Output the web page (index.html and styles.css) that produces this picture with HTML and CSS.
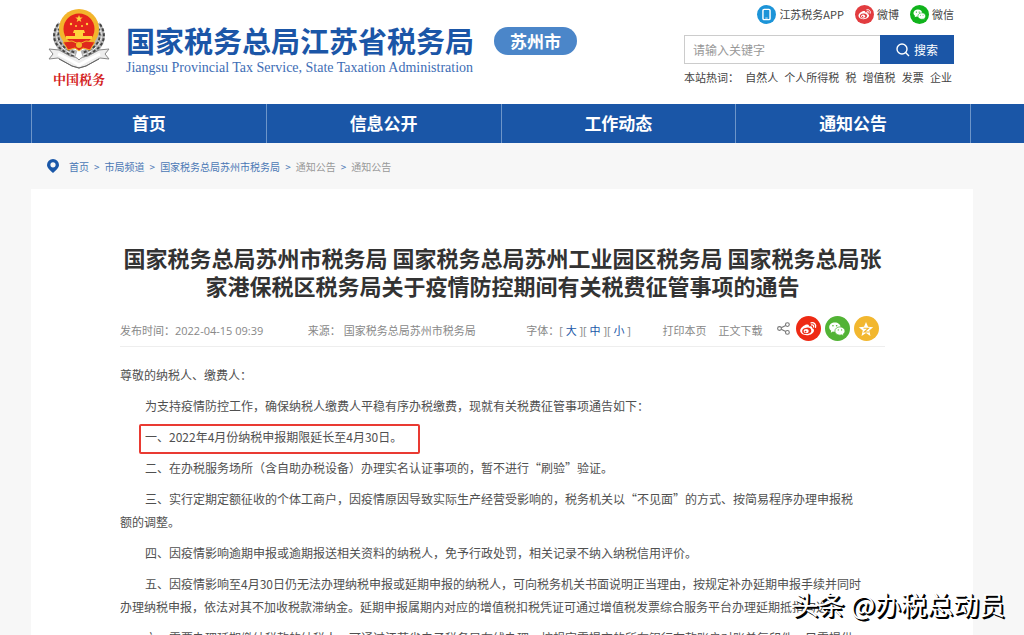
FILE: index.html
```html
<!DOCTYPE html>
<html lang="zh-CN">
<head>
<meta charset="utf-8">
<title>国家税务总局江苏省税务局</title>
<link rel="stylesheet" href="styles.css">
</head>
<body>
<svg class="defs" width="0" height="0" aria-hidden="true">
  <symbol id="weibo" viewBox="0 0 24 24">
    <path fill="#fff" d="M10.4 7.2c1.8-.6 3 .1 2.600 2 2.500-.8 4.200 0 3.500 2 1.200.4 2 1.100 2 2.300 0 2.600-3.500 5.200-7.700 5.200-4 0-7.300-1.900-7.300-4.800 0-2.700 3.800-5.900 6.900-6.700z"/>
    <ellipse cx="10.600" cy="14" rx="5" ry="3.500" fill="currentColor" transform="rotate(-8 10.600 14)"/>
    <ellipse cx="10" cy="14.300" rx="2.800" ry="2.400" fill="#fff"/>
    <circle cx="9.300" cy="14.800" r="1" fill="currentColor"/>
    <path d="M15.300 5.200c3.300-.8 5.900 1.900 4.900 5M15.800 7.500c1.700-.3 2.700.8 2.300 2.300" fill="none" stroke="#fff" stroke-width="1.400" stroke-linecap="round"/>
  </symbol>
  <symbol id="wechat" viewBox="0 0 24 24">
    <path fill="#fff" d="M9.700 5c-3.500 0-6.200 2.200-6.200 5 0 1.600.8 3 2.200 3.900L5.200 16l2.300-1.200c.7.2 1.400.3 2.200.3 3.500 0 6.200-2.200 6.200-5S13.200 5 9.700 5z"/>
    <path fill="#fff" stroke="currentColor" stroke-width=".8" d="M15.200 9.700c-3.100 0-5.500 2-5.500 4.500s2.400 4.500 5.500 4.500c.7 0 1.300-.1 1.900-.3l2.100 1.100-.5-1.900c1.200-.8 2-2 2-3.400 0-2.500-2.400-4.500-5.500-4.500z"/>
    <g fill="currentColor"><circle cx="7.600" cy="8.500" r=".9"/><circle cx="11.600" cy="8.500" r=".9"/><circle cx="13.400" cy="13" r=".7"/><circle cx="17" cy="13" r=".7"/></g>
  </symbol>
</svg>

<header class="header">
  <a class="brand" href="#">
    <span class="emblem">
      <svg width="62" height="60" viewBox="0 0 62 60" aria-hidden="true">
        <g fill="none" stroke="#b5b5b5" stroke-width="9">
          <path d="M14 16C5 28 10 40 28 46"/><path d="M48 16c9 12 4 24-14 30"/>
        </g>
        <g fill="none" stroke="#444" stroke-width="2" stroke-dasharray="3 2">
          <path d="M10 15C1 29 8 41 27 48M14 14C5 30 13 39 28 44"/><path d="M52 15c9 14 2 26-17 33M48 14c9 16 1 25-14 30"/>
        </g>
        <g fill="none" stroke="#f4f4f4" stroke-width="1" stroke-dasharray="4 2"><path d="M12 16C4 29 11 40 27 46M50 16c8 13 1 24-15 30"/></g>
        <path d="M1 40l10 1 11 6c4 1 7 1 9 4 2-3 5-3 9-4l11-6 10-1-4 5 4 5-9-1-14 8-7 2-7-2-14-8-9 1 4-5z" fill="#eee" stroke="#888" stroke-width="1"/>
        <path d="M10 45l14 7 7 4 7-4 14-7" fill="none" stroke="#fff" stroke-width="3"/>
        <path d="M11 50l13 7 7 2 7-2 13-7" fill="none" stroke="#666" stroke-width="1"/>
        <ellipse cx="31" cy="20" rx="20" ry="20" fill="#f3b52c"/>
        <circle cx="31" cy="20" r="15.500" fill="#e5251c"/>
        <path d="M31 6l1 2.600h2.700l-2.200 1.700.8 2.700-2.300-1.600-2.300 1.600.8-2.700-2.200-1.700H30z" fill="#ffd23c"/>
        <g fill="#ffd23c"><circle cx="23" cy="15" r="1.200"/><circle cx="28" cy="17" r="1"/><circle cx="34" cy="17" r="1"/><circle cx="39" cy="15" r="1.200"/>
        <path d="M26 21h10l1 3H25zM27 24h8v3h9v3H18v-3h9z"/></g>
        <path d="M15 33l9-1 7 3 7-3 9 1-5 8-7-2-4 3-4-3-7 2z" fill="#df2a1c" stroke="#f3b52c" stroke-width="1"/>
        <circle cx="31" cy="36" r="3" fill="#f3b52c"/>
      </svg>
      <span class="emblem-text">中国税务</span>
    </span>
    <span class="names">
      <span class="name-cn">国家税务总局江苏省税务局</span>
      <span class="name-en">Jiangsu Provincial Tax Service, State Taxation Administration</span>
    </span>
  </a>
  <a class="city" href="#">苏州市</a>
  <div class="tools">
    <div class="apps">
      <a href="#"><svg width="19" height="19" viewBox="0 0 24 24" aria-hidden="true"><circle cx="12" cy="12" r="12" fill="#1c94d8"/><rect x="7.500" y="5.500" width="9" height="13" rx="1.500" fill="none" stroke="#fff" stroke-width="1.800"/><path d="M10.500 16.500h3" stroke="#fff"/></svg>江苏税务APP</a>
      <a href="#"><span class="dot dot-weibo"><svg width="17" height="17"><use href="#weibo"/></svg></span>微博</a>
      <a href="#"><span class="dot dot-wechat"><svg width="17" height="17"><use href="#wechat"/></svg></span>微信</a>
    </div>
    <form class="search">
      <input type="text" placeholder="请输入关键字" aria-label="请输入关键字">
      <button type="button"><svg width="14" height="14" viewBox="0 0 14 14" aria-hidden="true"><circle cx="6" cy="6" r="5" fill="none" stroke="#fff" stroke-width="1.400"/><path d="M9.600 9.600l3.400 3.400" stroke="#fff" stroke-width="1.400"/></svg>搜索</button>
    </form>
    <div class="hot"><span>本站热词：</span><a href="#">自然人</a><a href="#">个人所得税</a><a href="#">税</a><a href="#">增值税</a><a href="#">发票</a><a href="#">企业</a></div>
  </div>
</header>

<nav class="nav">
  <div class="nav-items">
    <a href="#">首页</a><a href="#">信息公开</a><a href="#">工作动态</a><a href="#">通知公告</a>
  </div>
</nav>

<main class="main">
  <div class="crumbs">
    <svg width="12" height="14" viewBox="0 0 12 14" aria-hidden="true"><path fill="#1a57a8" fill-rule="evenodd" d="M6 0a6 6 0 0 1 6 6c0 3-3 5-6 8-3-3-6-5-6-8a6 6 0 0 1 6-6zm0 3.200a2.600 2.600 0 1 0 0 5.200 2.600 2.600 0 0 0 0-5.200z"/></svg>
    <a href="#">首页</a><i>&gt;</i><a href="#">市局频道</a><i>&gt;</i><a href="#">国家税务总局苏州市税务局</a><i>&gt;</i><span>通知公告</span><i>&gt;</i><span>通知公告</span>
  </div>
  <article class="article">
    <h1>国家税务总局苏州市税务局 国家税务总局苏州工业园区税务局 国家税务总局张<br>家港保税区税务局关于疫情防控期间有关税费征管事项的通告</h1>
    <div class="meta">
      <span class="date">发布时间：2022-04-15 09:39</span>
      <span class="source">来源： 国家税务总局苏州市税务局</span>
      <span class="sizes">字体：[ <a href="#">大</a> ][ <a href="#">中</a> ][ <a href="#">小</a> ]</span>
      <span class="actions"><a href="#">打印本页</a><a href="#">正文下载</a></span>
      <span class="share">
        <svg class="share-mark" width="13" height="13" viewBox="0 0 13 13" aria-hidden="true"><g fill="none" stroke="#777" stroke-width="1.100"><circle cx="2.500" cy="6.500" r="1.900"/><circle cx="10.400" cy="2.600" r="1.900"/><circle cx="10.400" cy="10.400" r="1.900"/><path d="M4.200 5.700l4.500-2.300M4.200 7.300l4.500 2.300"/></g></svg>
        <a class="round red" href="#" aria-label="微博"><svg width="22" height="22"><use href="#weibo"/></svg></a>
        <a class="round green" href="#" aria-label="微信"><svg width="22" height="22"><use href="#wechat"/></svg></a>
        <a class="round gold" href="#" aria-label="收藏"><svg width="16" height="16" viewBox="0 0 16 16"><path fill="#fff" d="M8 1l2 4.800 5.200.4-4 3.400L12.500 15 8 12.100 3.500 15l1.300-5.400-4-3.400L6 5.800z"/><path d="M5.500 7.200h5L6.200 11h5" fill="none" stroke="#f2b72f" stroke-width="1.100"/></svg></a>
      </span>
    </div>
    <div class="text">
      <p class="lead">尊敬的纳税人、缴费人：</p>
      <p>为支持疫情防控工作，确保纳税人缴费人平稳有序办税缴费，现就有关税费征管事项通告如下：</p>
      <p class="marked">一、2022年4月份纳税申报期限延长至4月30日。</p>
      <p>二、在办税服务场所（含自助办税设备）办理实名认证事项的，暂不进行“刷验”验证。</p>
      <p>三、实行定期定额征收的个体工商户，因疫情原因导致实际生产经营受影响的，税务机关以“不见面”的方式、按简易程序办理申报税<br>额的调整。</p>
      <p>四、因疫情影响逾期申报或逾期报送相关资料的纳税人，免予行政处罚，相关记录不纳入纳税信用评价。</p>
      <p>五、因疫情影响至4月30日仍无法办理纳税申报或延期申报的纳税人，可向税务机关书面说明正当理由，按规定补办延期申报手续并同时<br>办理纳税申报，依法对其不加收税款滞纳金。延期申报属期内对应的增值税扣税凭证可通过增值税发票综合服务平台办理延期抵扣勾选。</p>
      <p>六、需要办理延期缴纳税款的纳税人，可通过江苏省电子税务局在线办理，按规定需提交的所有银行存款账户对账单复印件，只需提供</p>
    </div>
  </article>
</main>
<div class="watermark">头条 @办税总动员</div>
</body>
</html>
```
FILE: styles.css
```css
*, *::after { box-sizing: border-box; }

body {
  margin: 0;
  height: 100vh;
  overflow: hidden;
  position: relative;
  background: #f7f7f7;
  color: #505050;
  font: 12px/23px "Noto Sans CJK SC", sans-serif;
}

a { color: inherit; text-decoration: none; }
svg { display: block; flex: none; }
.defs { position: absolute; }

.header {
  display: flex;
  align-items: flex-start;
  height: 104px;
  padding: 0 70px 0 48px;
  background: #fff;
}
.brand { display: flex; gap: 16px; }
.emblem {
  display: flex;
  flex-direction: column;
  align-items: center;
  padding-top: 9px;
}
.emblem-text {
  color: #d3211d;
  font: bold 13px/20px "Noto Serif CJK SC", "Noto Sans CJK SC", serif;
}
.names {
  display: flex;
  flex-direction: column;
  padding-top: 22px;
  white-space: nowrap;
}
.name-cn { color: #1b56a7; font-size: 29px; font-weight: bold; line-height: 36px; }
.name-en { color: #3d6db5; font: 14px/20px "Liberation Serif", serif; }
.city {
  margin: 27px 0 0 20px;
  padding: 0 16px;
  border-radius: 14px;
  background: #4b86c9;
  color: #fff;
  font-size: 17px;
  font-weight: bold;
  line-height: 28px;
  white-space: nowrap;
}

.tools { width: 270px; margin-left: auto; padding-top: 4px; font-size: 11px; }
.apps { display: flex; justify-content: flex-end; gap: 11px; height: 20px; color: #444; }
.apps a { display: flex; align-items: center; gap: 3px; }
.dot {
  display: flex;
  align-items: center;
  justify-content: center;
  width: 19px;
  height: 19px;
  border-radius: 50%;
}
.dot-weibo { background: #e23c3f; color: #e23c3f; }
.dot-wechat { background: #10b31c; color: #10b31c; }
.search { display: flex; height: 29px; margin-top: 11px; }
.search input {
  flex: 1;
  min-width: 0;
  padding: 0 8px;
  border: 1px solid #ccc;
  border-right: 0;
  font: inherit;
  font-size: 12px;
}
.search input::placeholder { color: #999; }
.search button {
  display: flex;
  align-items: center;
  justify-content: center;
  gap: 4px;
  width: 74px;
  padding: 0;
  border: 0;
  background: #1b56a7;
  color: #fff;
  font: inherit;
  font-size: 12px;
}
.hot { display: flex; justify-content: space-between; padding: 2px 2px 0 0; color: #444; white-space: nowrap; }

.nav { height: 39px; padding: 0 53px 0 31px; background: #1a56a7; }
.nav-items { display: flex; height: 39px; border-left: 1px solid #6d95c9; }
.nav-items a {
  flex: 1;
  border-right: 1px solid #6d95c9;
  color: #fff;
  font-size: 17px;
  font-weight: bold;
  line-height: 37px;
  text-align: center;
}

.main { padding: 0 51px 0 31px; }
.crumbs {
  display: flex;
  align-items: center;
  height: 46px;
  padding: 0 0 0 16px;
  color: #4a77b5;
  font-size: 10px;
}
.crumbs svg { margin-right: 10px; }
.crumbs i { padding: 0 5px; font-style: normal; }
.crumbs span { color: #999; }

.article { padding: 54px 88px 0 89px; background: #fff; }
h1 {
  margin: 0;
  color: #333;
  font-size: 22px;
  line-height: 28px;
  text-align: center;
  white-space: nowrap;
}
.meta {
  display: flex;
  align-items: center;
  justify-content: space-between;
  height: 48px;
  padding: 12px 6px 0 0;
  border-bottom: 1px solid #eee;
  color: #888;
  font: 11px/20px "Open Sans", "Noto Sans CJK SC", sans-serif;
  white-space: nowrap;
}
.date, .source, .sizes, .actions { padding-top: 4px; }
.date { margin-right: 14px; }
.source { margin-right: 20px; }
.sizes a { color: #1a57a8; }
.actions { display: flex; gap: 12px; margin-left: 1px; }
.share { display: flex; align-items: center; gap: 4px; margin-left: -16px; }
.share-mark { margin-right: 2px; }
.round {
  display: flex;
  align-items: center;
  justify-content: center;
  width: 25px;
  height: 25px;
  border-radius: 50%;
}
.red { background: #ee2a14; color: #ee2a14; }
.green { background: #52b335; color: #52b335; }
.gold { background: #f2b72f; }

.text { padding-top: 16px; }
.text p { margin: 0 0 8px; text-indent: 25px; white-space: nowrap; }
.text .lead { text-indent: 0; }
.marked { position: relative; }
.marked::after {
  content: "";
  position: absolute;
  top: -1px;
  left: 19px;
  width: 281px;
  height: 30px;
  border: 2px solid #e93a32;
  border-radius: 2px;
}

.watermark {
  position: absolute;
  right: 19px;
  bottom: 13px;
  color: #fff;
  font-size: 26px;
  line-height: 36px;
  text-shadow: 1px 1px 0 #000, 2px 2px 0 #000;
  white-space: nowrap;
}
```
